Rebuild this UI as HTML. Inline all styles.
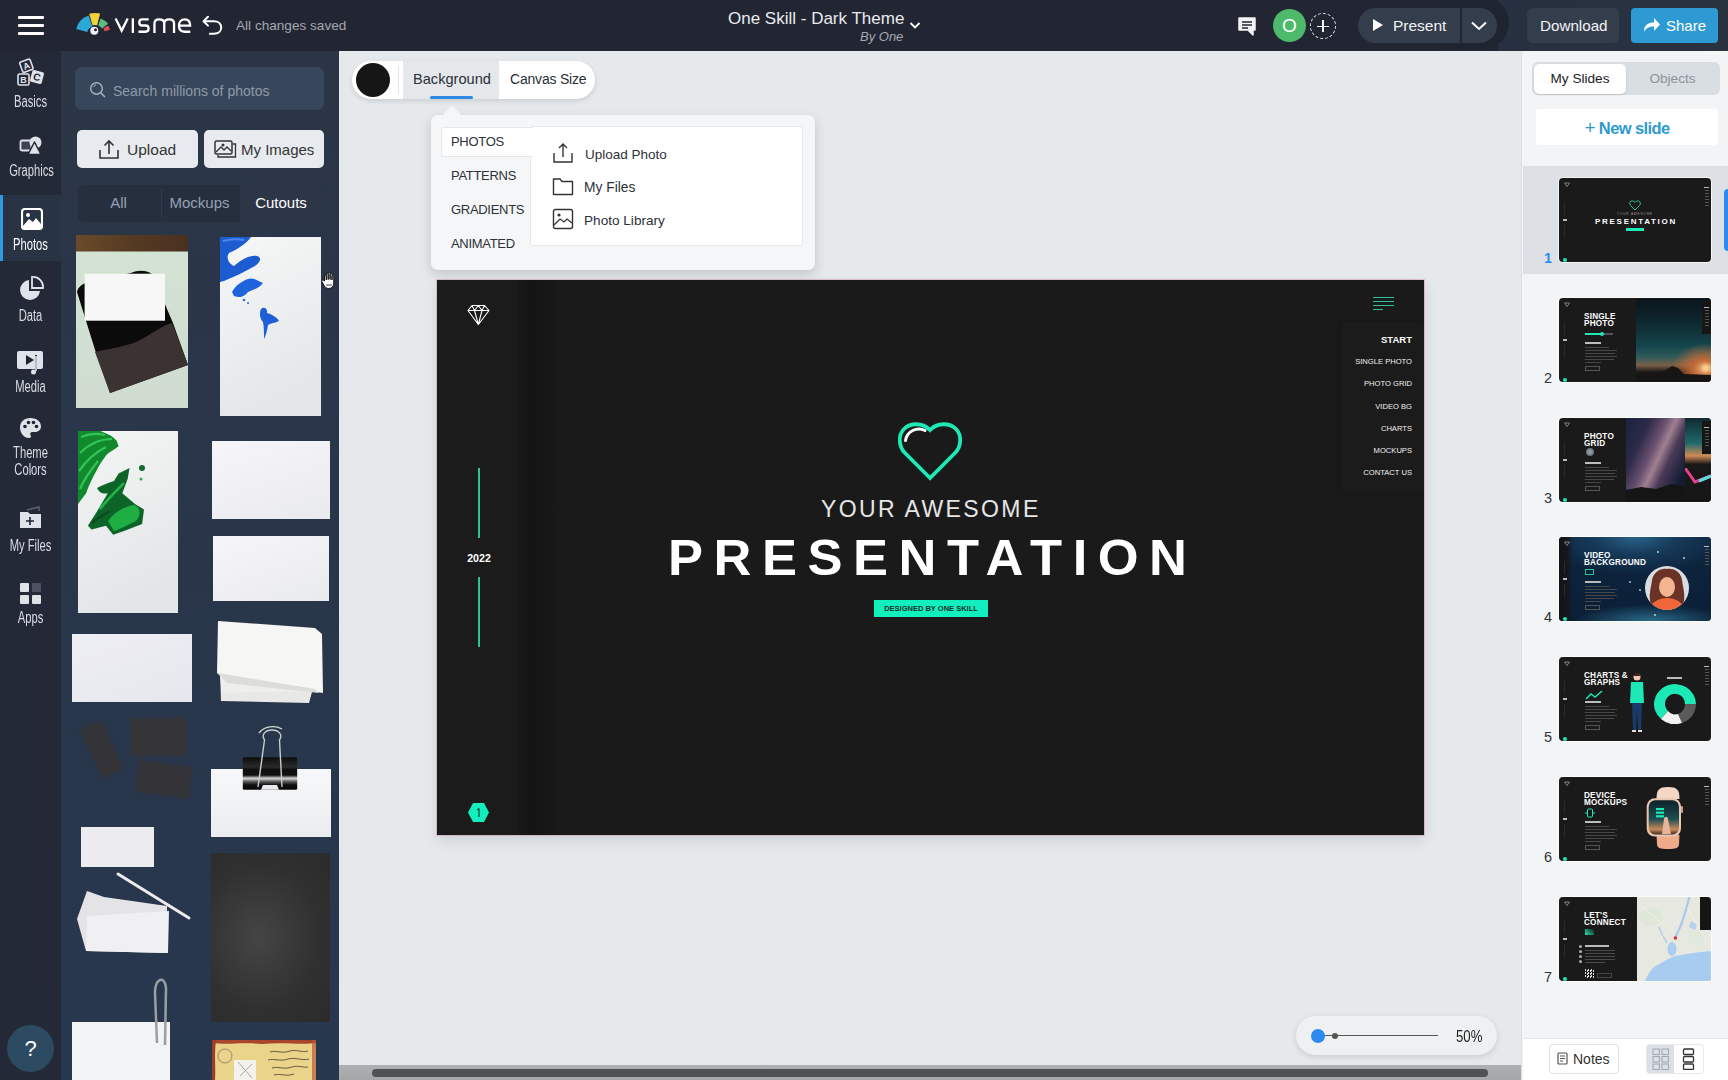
<!DOCTYPE html>
<html><head><meta charset="utf-8">
<style>
*{margin:0;padding:0;box-sizing:border-box}
html,body{width:1728px;height:1080px;overflow:hidden;font-family:"Liberation Sans",sans-serif;background:#e6e9ec}
.a{position:absolute}
#top{left:0;top:0;width:1728px;height:51px;background:#222633}
#rail{left:0;top:51px;width:61px;height:1029px;background:#242937}
#panel{left:61px;top:51px;width:278px;height:1029px;background:linear-gradient(#2b3546 0%,#29364a 50%,#27374e 100%)}
#canvas{left:339px;top:51px;width:1182px;height:1029px;background:#e6e9ec}
#right{left:1521px;top:51px;width:207px;height:1029px;background:#f3f4f5;border-left:1px solid #dcdfe3;overflow:hidden}
.btn{background:#e7ebf0;border-radius:5px}
.th{width:152px;height:84px;border-radius:4px;background:#1a1a1a;overflow:hidden;font-size:0;box-shadow:0 0 0 1px rgba(255,255,255,.7)}
.lbl{color:#d9dde4;font-size:16px;text-align:center;width:61px;left:0;transform:scaleX(.70)}
</style></head><body>
<div id="top" class="a">
 <div class="a" style="left:18px;top:16px;width:26px;height:3px;background:#fff;border-radius:1px"></div>
 <div class="a" style="left:18px;top:24px;width:26px;height:3px;background:#fff;border-radius:1px"></div>
 <div class="a" style="left:18px;top:32px;width:26px;height:3px;background:#fff;border-radius:1px"></div>
 <svg class="a" style="left:70px;top:5px" width="45" height="36" viewBox="0 0 45 36"><path d="M6.16 23.95 A19.5 19.5 0 0 1 18.65 10.56 L22.40 21.44 A8 8 0 0 0 17.27 26.93 Z" fill="#2aa8d8"/><path d="M19.21 8.81 A21 21 0 0 1 30.08 8.62 L27.18 20.27 A9 9 0 0 0 22.52 20.35 Z" fill="#f2d33c"/><path d="M30.64 13.50 A16.5 16.5 0 0 1 38.00 18.84 L32.09 23.46 A9 9 0 0 0 28.08 20.54 Z" fill="#5cba7d"/><path d="M38.00 20.56 A15.5 15.5 0 0 1 39.90 24.73 L34.61 26.24 A10 10 0 0 0 33.39 23.55 Z" fill="#e04b50"/><circle cx="24.299999999999997" cy="25.8" r="4" fill="#f4f6fa"/><circle cx="25.5" cy="24.7" r="1.5" fill="#222633"/></svg>
 <svg class="a" style="left:108px;top:10px" width="90" height="30" viewBox="0 0 90 30"><g fill="none" stroke="#fff" stroke-width="2.3"><path d="M7.6 8.6 L13.65 20.6 L19.7 8.6" stroke-linejoin="miter"/><path d="M24.85 8.3 V22.9"/><path d="M40.6 9.45 H34 C32 9.45 31.3 10.8 31.3 12.4 C31.3 14.3 32.3 15.5 34.3 15.5 H37.6 C39.6 15.5 40.6 16.7 40.6 18.6 C40.6 20.6 39.6 21.75 37.6 21.75 H30.5"/><path d="M46.45 22.9 V13.6 C46.45 11 48.3 9.45 51.2 9.45 C54.2 9.45 56.25 11 56.25 13.6 V22.9 M56.25 13.6 C56.25 11 58.3 9.45 61.2 9.45 C64.1 9.45 66.05 11 66.05 13.6 V22.9"/><path d="M71 15.6 H82.15 C82.15 11.6 79.8 9.45 76.6 9.45 C73.2 9.45 70.95 12 70.95 15.6 C70.95 19.4 73.2 21.75 76.6 21.75 H82.3"/></g></svg>
 <svg class="a" style="left:200px;top:14px" width="24" height="22" viewBox="0 0 24 22"><g fill="none" stroke="#fff" stroke-width="2" stroke-linecap="round" stroke-linejoin="round"><path d="M8 2.8 L3.5 7.2 L8 11.6"/><path d="M4 7.2 H14 C18.5 7.2 21.2 10 21.2 13.6 C21.2 17.3 18.5 19.8 14 19.8 H9.8"/></g></svg>
 <div class="a" style="left:236px;top:18px;font-size:13.6px;color:#a3a8b2">All changes saved</div>
 <div class="a" style="left:728px;top:9px;font-size:17px;color:#e9ebef">One Skill - Dark Theme</div>
 <div class="a" style="left:860px;top:29px;font-size:13px;color:#a3a8b2;font-style:italic">By One</div>
 <svg class="a" style="left:909px;top:21px" width="12" height="9" viewBox="0 0 12 9"><path d="M1.5 2 L6 6.5 L10.5 2" fill="none" stroke="#fff" stroke-width="1.8"/></svg>
 <svg class="a" style="left:1237px;top:16px" width="20" height="20" viewBox="0 0 20 20"><path d="M2 2 H18 V14 H16 V19 L11 14 H2 Z" fill="#f2f3f5" stroke="#f2f3f5" stroke-linejoin="round" stroke-width="1.5"/><path d="M5 6 H15 M5 9 H15 M5 12 H11" stroke="#222633" stroke-width="1.3"/></svg>
 <div class="a" style="left:1273px;top:9px;width:33px;height:33px;border-radius:50%;background:#4db96a;color:#fff;font-size:19px;text-align:center;line-height:33px">O</div>
 <div class="a" style="left:1310px;top:13px;width:26px;height:26px;border-radius:50%;border:1.5px dashed #e5e7eb"></div>
 <div class="a" style="left:1317px;top:25.5px;width:12px;height:1.2px;background:#f4f4f4"></div>
 <div class="a" style="left:1322.4px;top:20px;width:1.2px;height:12px;background:#f4f4f4"></div>
 <div class="a" style="left:1498px;top:0;width:230px;height:51px;background:linear-gradient(90deg,#273040,#29323f)"></div>
 <div class="a" style="left:1440px;top:-3px;width:69px;height:52px;border-radius:0 27px 27px 0;background:#1f2431"></div>
 <div class="a" style="left:1358px;top:8px;width:139px;height:35px;border-radius:18px;background:#343d4c"></div>
 <div class="a" style="left:1460px;top:8px;width:2px;height:35px;background:#222633"></div>
 <svg class="a" style="left:1372px;top:18px" width="12" height="14" viewBox="0 0 12 14"><path d="M1 1 L11 7 L1 13 Z" fill="#fff"/></svg>
 <div class="a" style="left:1393px;top:17px;font-size:15.5px;color:#f2f3f5">Present</div>
 <svg class="a" style="left:1469px;top:20px" width="20" height="12" viewBox="0 0 20 12"><path d="M3 2.5 L10 9 L17 2.5" fill="none" stroke="#fff" stroke-width="2"/></svg>
 <div class="a" style="left:1527px;top:8px;width:92px;height:35px;border-radius:6px;background:#343d4b"></div>
 <div class="a" style="left:1540px;top:17px;font-size:15.2px;color:#f2f3f5">Download</div>
 <div class="a" style="left:1631px;top:8px;width:87px;height:35px;border-radius:4px;background:#2d9ad3"></div>
 <svg class="a" style="left:1643px;top:17px" width="18" height="16" viewBox="0 0 18 16"><path d="M1 15 C1 8 5 5.5 11 5.5 V1 L17 7.5 L11 14 V9.5 C6 9.5 3 11 1 15 Z" fill="#fff"/></svg>
 <div class="a" style="left:1666px;top:17px;font-size:15px;color:#fff">Share</div>
</div>
<div id="rail" class="a">
 <div class="a" style="left:0;top:144px;width:61px;height:66px;background:#283344"></div>
 <div class="a" style="left:0;top:144px;width:3px;height:66px;background:#2d9be0"></div>
 <!-- basics -->
 <svg class="a" style="left:16px;top:7px" width="30" height="30" viewBox="0 0 30 30">
  <g transform="rotate(-20 11 8)"><rect x="5" y="2" width="11" height="11" rx="1.5" fill="none" stroke="#dfe2e8" stroke-width="1.6"/><text x="10.5" y="11" font-size="9" font-family="Liberation Sans" font-weight="bold" text-anchor="middle" fill="#dfe2e8">A</text></g>
  <rect x="2" y="16" width="11" height="11" rx="1.5" fill="none" stroke="#dfe2e8" stroke-width="1.6"/><text x="7.5" y="25" font-size="9" font-family="Liberation Sans" font-weight="bold" text-anchor="middle" fill="#dfe2e8">B</text>
  <g transform="rotate(15 21 19)"><rect x="15" y="13" width="12" height="12" rx="1.5" fill="#dfe2e8"/><text x="21" y="22.5" font-size="10" font-family="Liberation Sans" font-weight="bold" text-anchor="middle" fill="#1f2432">C</text></g>
 </svg>
 <div class="a lbl" style="top:42px">Basics</div>
 <!-- graphics -->
 <svg class="a" style="left:18px;top:84px" width="26" height="24" viewBox="0 0 26 24">
  <rect x="2.5" y="5.5" width="11" height="10" rx="1.5" fill="#3d4350" stroke="#dfe2e8" stroke-width="1.8"/>
  <circle cx="17.5" cy="7.5" r="6" fill="#dfe2e8"/>
  <path d="M16.5 7 L23 19.5 H10 Z" fill="#dfe2e8" stroke="#232836" stroke-width="1.5" stroke-linejoin="round"/>
 </svg>
 <div class="a lbl" style="top:111px">Graphics</div>
 <!-- photos -->
 <svg class="a" style="left:21px;top:157px" width="22" height="22" viewBox="0 0 22 22">
  <rect x="1" y="1" width="20" height="20" rx="3" fill="none" stroke="#fff" stroke-width="2.2"/>
  <circle cx="7" cy="7" r="2" fill="#fff"/>
  <path d="M2 18 L8 11 L12 14 L15 10 L20 16 V20 H2 Z" fill="#fff"/>
 </svg>
 <div class="a lbl" style="top:185px;color:#fff">Photos</div>
 <!-- data -->
 <svg class="a" style="left:18px;top:225px" width="26" height="26" viewBox="0 0 26 26">
  <path d="M11 4 A10 10 0 1 0 22 15 H11 Z" fill="#dfe2e8"/>
  <path d="M14 1 A10 10 0 0 1 25 12 H14 Z" fill="none" stroke="#dfe2e8" stroke-width="1.8"/>
 </svg>
 <div class="a lbl" style="top:256px">Data</div>
 <!-- media -->
 <svg class="a" style="left:16px;top:298px" width="29" height="28" viewBox="0 0 29 28">
  <rect x="1" y="2" width="26" height="18" rx="2" fill="#dfe2e8"/>
  <path d="M10 6 L18 11 L10 16 Z" fill="#1f2432"/>
  <rect x="19" y="6" width="2" height="16" fill="#1f2432"/>
  <path d="M20 7 V22" stroke="#dfe2e8" stroke-width="1.6"/>
  <circle cx="17.5" cy="23" r="2.5" fill="#dfe2e8"/>
 </svg>
 <div class="a lbl" style="top:327px">Media</div>
 <!-- theme colors -->
 <svg class="a" style="left:19px;top:366px" width="23" height="22" viewBox="0 0 23 22">
  <path d="M11.5 1 C5 1 1 5 1 10.5 C1 16 5 21 10 21 C12 21 12.5 19.5 11.5 18 C10.5 16.5 11.5 15 13.5 15 H16 C19.5 15 22 12.5 22 9.5 C22 4.5 17.5 1 11.5 1 Z" fill="#dfe2e8"/>
  <circle cx="6" cy="9.5" r="1.8" fill="#1f2432"/><circle cx="9.5" cy="5.5" r="1.8" fill="#1f2432"/><circle cx="14.5" cy="5.5" r="1.8" fill="#1f2432"/><circle cx="17.5" cy="9.5" r="1.8" fill="#1f2432"/>
 </svg>
 <div class="a lbl" style="top:393px;line-height:17px">Theme<br>Colors</div>
 <!-- my files -->
 <svg class="a" style="left:19px;top:455px" width="24" height="24" viewBox="0 0 24 24">
  <path d="M1 6 H9 L11 8 H22 V22 H1 Z" fill="#dfe2e8"/>
  <path d="M8 4 L20 1 V5" fill="none" stroke="#5b6270" stroke-width="1.5"/>
  <path d="M7 15 H15 M11 11 V19" stroke="#1f2432" stroke-width="1.6"/>
 </svg>
 <div class="a lbl" style="top:486px">My Files</div>
 <!-- apps -->
 <svg class="a" style="left:20px;top:532px" width="22" height="22" viewBox="0 0 22 22">
  <rect x="0" y="0" width="9" height="9" rx="1" fill="#dfe2e8"/><rect x="12" y="0" width="9" height="9" rx="1" fill="#4a5262"/>
  <rect x="0" y="12" width="9" height="9" rx="1" fill="#dfe2e8"/><rect x="12" y="12" width="9" height="9" rx="1" fill="#dfe2e8"/>
 </svg>
 <div class="a lbl" style="top:558px">Apps</div>
 <div class="a" style="left:7px;top:974px;width:47px;height:47px;border-radius:50%;background:#2c4b63;color:#fff;font-size:22px;text-align:center;line-height:47px">?</div>
</div>
<div id="panel" class="a">
 <div class="a" style="left:14px;top:15.5px;width:249px;height:43.5px;border-radius:7px;background:#37465a"></div>
 <svg class="a" style="left:28px;top:30px" width="18" height="18" viewBox="0 0 18 18"><circle cx="7.5" cy="7.5" r="5.8" fill="none" stroke="#a9b3c2" stroke-width="1.4"/><path d="M11.7 11.7 L16 16" stroke="#a9b3c2" stroke-width="1.5"/><path d="M4.5 6 A3.5 3.5 0 0 1 7 3.8" fill="none" stroke="#a9b3c2" stroke-width="1"/></svg>
 <div class="a" style="left:52px;top:31.5px;font-size:14px;color:#8f9aab">Search millions of photos</div>
 <div class="a btn" style="left:16px;top:79px;width:121px;height:38px"></div>
 <svg class="a" style="left:37px;top:88px" width="22" height="21" viewBox="0 0 22 21"><path d="M2 11 V19 H20 V11" fill="none" stroke="#333" stroke-width="1.6"/><path d="M11 15 V2 M6.5 6.5 L11 2 L15.5 6.5" fill="none" stroke="#333" stroke-width="1.6"/></svg>
 <div class="a" style="left:66px;top:89.5px;font-size:15.5px;color:#333">Upload</div>
 <div class="a btn" style="left:143px;top:79px;width:120px;height:38px"></div>
 <svg class="a" style="left:153px;top:88px" width="23" height="20" viewBox="0 0 23 20"><rect x="1" y="2" width="17" height="13" rx="1.5" fill="none" stroke="#333" stroke-width="1.5"/><path d="M19 5 H21.5 V18 H4 V16" fill="none" stroke="#333" stroke-width="1.3"/><path d="M2 13 L7 8 L10 11 L13 8 L17 12" fill="none" stroke="#333" stroke-width="1.3"/><circle cx="9" cy="6" r="1.5" fill="#333"/></svg>
 <div class="a" style="left:180px;top:90px;font-size:15px;color:#333">My Images</div>
 <div class="a" style="left:17px;top:134px;width:244px;height:37px;border-radius:5px;background:#252f3e"></div>
 <div class="a" style="left:179px;top:134px;width:82px;height:37px;border-radius:0 5px 5px 0;background:#2c3647"></div>
 <div class="a" style="left:100px;top:138px;width:1px;height:29px;background:#2f3a4b"></div>
 <div class="a" style="left:17px;top:143px;width:81px;text-align:center;font-size:15px;color:#97a1b1">All</div>
 <div class="a" style="left:98px;top:143px;width:81px;text-align:center;font-size:15px;color:#97a1b1">Mockups</div>
 <div class="a" style="left:179px;top:143px;width:82px;text-align:center;font-size:15px;color:#fff">Cutouts</div>
 <svg class="a" style="left:15px;top:184px" width="112" height="173" viewBox="0 0 112 173"><defs><linearGradient id="mint" x1="0" y1="0" x2="0" y2="1"><stop offset="0" stop-color="#d4e3d4"/><stop offset="1" stop-color="#cfdccf"/></linearGradient><linearGradient id="brn" x1="0" y1="0" x2="1" y2="0"><stop offset="0" stop-color="#6a4a2a"/><stop offset=".5" stop-color="#553a22"/><stop offset="1" stop-color="#4a3020"/></linearGradient></defs><rect width="112" height="173" fill="url(#mint)"/><rect width="112" height="16.5" fill="url(#brn)"/><path d="M1 57 C2 52 6 49 12 47 L55 38 C62 35 70 35 76 39 L97 88 L112 130 L34 158 L20 118 Z" fill="#0c0b0b"/><path d="M19 117 C35 113 52 112 66 104 C78 97 88 90 96 88 L112 130 L34 158 Z" fill="#3b3332"/><rect x="8.6" y="38.7" width="80.4" height="47" fill="#f6f7f6"/></svg>
 <svg class="a" style="left:158.7px;top:186px" width="101" height="179" viewBox="0 0 101 179"><defs><linearGradient id="pap" x1="0" y1="0" x2=".3" y2="1"><stop offset="0" stop-color="#f6f7f7"/><stop offset="1" stop-color="#e4e6e8"/></linearGradient></defs><rect width="101" height="179" fill="url(#pap)"/><path d="M0 0 H31 C27 6 18 12 9 16 C6 20 8 26 14 29 C22 22 30 18 37 19 C42 20 41 26 33 30 C24 35 14 40 4 44 L0 45 Z" fill="#1d5bd0"/><path d="M3 4 C10 2 18 2 24 3" stroke="#4a88f0" stroke-width="2" fill="none"/><path d="M12 55 C16 48 22 44 28 42 C33 40 38 44 43 46 C40 50 34 53 28 55 C24 60 20 61 14 59 Z" fill="#1f63dc"/><circle cx="24" cy="63" r="1.3" fill="#2a66d8"/><circle cx="28" cy="66" r="1" fill="#2a66d8"/><path d="M41 72 C44 69 48 72 47 76 C51 77 57 80 59 84 C55 86 51 86 48 88 C47 94 46 98 44 102 C44 96 44 90 43 85 C40 82 39 76 41 72 Z" fill="#1e5ed6"/></svg>
 <svg class="a" style="left:17px;top:380px" width="100" height="182" viewBox="0 0 100 182"><defs><linearGradient id="pap2" x1="0" y1="0" x2=".3" y2="1"><stop offset="0" stop-color="#f4f5f5"/><stop offset="1" stop-color="#e3e6e7"/></linearGradient></defs><rect width="100" height="182" fill="url(#pap2)"/><path d="M0 0 H22.6 C30 3 36 6 38.8 9.9 L40.6 15.3 C36 19 31 21 28 24.4 C24 30 21 34 19 38.8 C15 46 11 54 8.1 62.3 L0 73.1 Z" fill="#118a2e"/><path d="M3 6 C10 3 18 2 27 4 M2 22 C10 14 20 8 34 8 M1 40 C8 30 16 22 28 16 M2 58 C6 48 12 40 20 30" stroke="#34c455" stroke-width="2.2" fill="none"/><path d="M9.9 94.8 L19 80.4 L29.8 62.3 C26 63 22 63 19 57 C24 54 30 52 36 50 L40.6 42.4 L51.5 37 L49.7 47.7 L44.3 62.3 L57 73 L66 78.5 L64.1 93 L46 100 L35.2 103.8 L28 94.8 L13.5 98.5 Z" fill="#0c6428"/><path d="M30 90 C36 82 44 76 56 74 C62 76 64 84 58 90 C50 94 42 98 36 100 Z" fill="#1fae42"/><path d="M22 78 C28 70 36 62 46 52" stroke="#23b246" stroke-width="2.5" fill="none"/><path d="M14 92 C20 86 26 84 32 80" stroke="#0a4e20" stroke-width="2.5" fill="none"/><circle cx="64" cy="37" r="3" fill="#0f6a2c"/><circle cx="63" cy="48" r="1.5" fill="#2bb04a"/></svg>
 <div class="a" style="left:151px;top:390px;width:118px;height:78px;background:linear-gradient(160deg,#f6f6f8,#e9eaee)"></div>
 <div class="a" style="left:152px;top:485px;width:116px;height:65px;background:linear-gradient(160deg,#f6f6f8,#e9eaee)"></div>
 <div class="a" style="left:11px;top:583px;width:120px;height:68px;background:linear-gradient(160deg,#eeeff4,#e6e6ee)"></div>
 <svg class="a" style="left:156px;top:570px" width="112" height="84" viewBox="0 0 112 84"><path d="M3 50 L4 80 L92 82 L98 60 Z" fill="#e8e8e6"/><path d="M3 55 L5 72 L100 70 L102 48 Z" fill="#eeeeec"/><path d="M1 0 L98 7 L105 13 L106 72 L12 58 L0 52 Z" fill="#f6f6f5"/><path d="M0 52 L98 68 L102 72 L10 62 Z" fill="#dcdcda"/></svg>
 <svg class="a" style="left:15px;top:666px;filter:blur(1.8px)" width="116" height="84" viewBox="0 0 116 84"><path d="M3 12 L25 3 L48 52 L27 62 Z" fill="#363232" opacity=".8"/><rect x="55" y="1" width="55" height="38" fill="#393433" opacity=".8"/><path d="M62 43 L116 50 L114 82 L60 75 Z" fill="#363232" opacity=".8"/></svg>
 <svg class="a" style="left:150px;top:669px" width="122" height="120" viewBox="0 0 122 120"><defs><linearGradient id="cg" x1="0" y1="0" x2="0" y2="1"><stop offset="0" stop-color="#f7f8fa"/><stop offset="1" stop-color="#eaecef"/></linearGradient><linearGradient id="clip" x1="0" y1="0" x2="0" y2="1"><stop offset="0" stop-color="#0d0d0d"/><stop offset=".3" stop-color="#2a2a2a"/><stop offset=".38" stop-color="#0f0f0f"/><stop offset=".55" stop-color="#111"/><stop offset=".65" stop-color="#d5d6d8"/><stop offset=".75" stop-color="#5a5a5a"/><stop offset=".85" stop-color="#101010"/><stop offset="1" stop-color="#080808"/></linearGradient></defs><rect x="0" y="49" width="120" height="68" fill="url(#cg)"/><rect x="31.8" y="37.3" width="54.4" height="32.4" rx="1.5" fill="url(#clip)"/><path d="M50 69.7 L52 65 H66 L68 69.7 Z" fill="#e8eaec"/><path d="M47 67 L53.5 20 C50 15 54 10 61 10 C68 10 72 15 68.5 20 L71 67" fill="none" stroke="#c9cbce" stroke-width="1.4"/><path d="M48 13 C53 6 64 5 71 9" fill="none" stroke="#d2d4d6" stroke-width="1.3"/></svg>
 <div class="a" style="left:20px;top:776px;width:73px;height:40px;background:#ecebef"></div>
 <svg class="a" style="left:13px;top:820px" width="120" height="85" viewBox="0 0 120 85"><path d="M3 48 L13 20 L30 26 L93 35 L93 82 L12 80 Z" fill="#e4e3e6"/><path d="M12 80 L13 45 L95 40 L94 82 Z" fill="#f0eff2"/><path d="M44 3 L115 47" stroke="#ececee" stroke-width="3" stroke-linecap="round"/></svg>
 <div class="a" style="left:150px;top:802px;width:119px;height:169px;background:radial-gradient(ellipse at 40% 50%,#454545,#303030 60%,#2b2b2b)"></div>
 <div class="a" style="left:11px;top:971px;width:98px;height:58px;background:#f2f3f5"></div>
 <svg class="a" style="left:90px;top:922px" width="20" height="75" viewBox="0 0 20 75"><path d="M6 70 L4 20 C4 5 14 2 15 15 L14 72" fill="none" stroke="#9a9ea3" stroke-width="2.5"/></svg>
 <svg class="a" style="left:151px;top:989px" width="104" height="40" viewBox="0 0 104 40"><rect x="0" y="0" width="104" height="40" fill="#e9d48a"/><path d="M0 0 H104 V3 C90 5 70 2 50 4 C30 2 15 5 0 3 Z" fill="#a8452c"/><path d="M0 0 V40 H3 C4 30 2 15 4 0 Z" fill="#9a3e28"/><path d="M100 0 V40 H104 V0 Z" fill="#b85a38" opacity=".7"/><circle cx="13" cy="16" r="7" fill="none" stroke="#9a8a6a" stroke-width="1"/><rect x="22" y="20" width="22" height="20" fill="#f4f2ec"/><path d="M26 22 L40 38 M40 24 L28 36" stroke="#aaa" stroke-width="1"/><path d="M58 12 C64 10 70 14 78 11 C84 9 90 13 96 11 M56 20 C62 18 68 22 76 19 C84 17 90 21 97 19 M60 28 C66 26 72 30 80 27 C86 25 92 28 96 27 M62 35 C68 33 74 37 82 34" fill="none" stroke="#5a4a3a" stroke-width=".9"/></svg>

</div>
<div id="canvas" class="a">
 <div class="a" style="left:13px;top:10px;width:243px;height:38px;border-radius:19px;background:#fff;box-shadow:0 2px 5px rgba(0,0,0,.12)"></div>
 <div class="a" style="left:17px;top:12px;width:34px;height:34px;border-radius:50%;background:#161616"></div>
 <div class="a" style="left:59px;top:15px;width:1px;height:28px;background:#e3e5e8"></div>
 <div class="a" style="left:64px;top:10px;width:96px;height:38px;background:#e5e8eb"></div>
 <div class="a" style="left:91px;top:45px;width:43px;height:3px;border-radius:2px;background:#2d8be6"></div>
 <div class="a" style="left:74px;top:20px;font-size:14.6px;color:#2a2f38">Background</div>
 <div class="a" style="left:171px;top:20px;font-size:14px;letter-spacing:-0.2px;color:#2a2f38">Canvas Size</div>
 <div class="a" style="left:92px;top:64px;width:384px;height:154.5px;border-radius:7px;background:#f5f6f7;box-shadow:0 4px 12px rgba(0,0,0,.16)"></div>
 <div class="a" style="left:107px;top:57px;width:12px;height:12px;background:#f5f6f7;transform:rotate(45deg)"></div>
 <div class="a" style="left:191px;top:75px;width:273px;height:120px;border-radius:3px;background:#fff;border:1px solid #e6e8eb"></div>
 <div class="a" style="left:102px;top:76px;width:92px;height:30px;border-radius:3px 0 0 3px;background:#fff;border:1px solid #e6e8eb;border-right:none"></div>
 <div class="a" style="left:112px;top:83px;font-size:13px;letter-spacing:-0.3px;color:#2d3139">PHOTOS</div>
 <div class="a" style="left:112px;top:117px;font-size:13px;letter-spacing:-0.3px;color:#2d3139">PATTERNS</div>
 <div class="a" style="left:112px;top:151px;font-size:13px;letter-spacing:-0.3px;color:#2d3139">GRADIENTS</div>
 <div class="a" style="left:112px;top:185px;font-size:13px;letter-spacing:-0.3px;color:#2d3139">ANIMATED</div>
 <svg class="a" style="left:213px;top:91px;" width="22" height="22" viewBox="0 0 22 22"><path d="M2 11 V20 H20 V11" fill="none" stroke="#333" stroke-width="1.4"/><path d="M11 15 V2 M7 6 L11 2 L15 6" fill="none" stroke="#333" stroke-width="1.4"/></svg>
 <div class="a" style="left:246px;top:95.5px;font-size:13.5px;color:#2d3139">Upload Photo</div>
 <svg class="a" style="left:213px;top:126px;" width="22" height="19" viewBox="0 0 22 19"><path d="M1.5 2 H8 L10 4.5 H20.5 V17.5 H1.5 Z" fill="none" stroke="#333" stroke-width="1.4" stroke-linejoin="round"/></svg>
 <div class="a" style="left:245px;top:128.5px;font-size:13.8px;color:#2d3139">My Files</div>
 <svg class="a" style="left:213px;top:157px;" width="22" height="22" viewBox="0 0 22 22"><rect x="1.5" y="1.5" width="19" height="19" rx="2" fill="none" stroke="#333" stroke-width="1.4"/><circle cx="7" cy="7" r="1.6" fill="#333"/><path d="M2 17 L8 11 L12 14 L15 11 L20 15" fill="none" stroke="#333" stroke-width="1.3"/></svg>
 <div class="a" style="left:245px;top:161.5px;font-size:13.6px;color:#2d3139">Photo Library</div>
 <div class="a" style="left:98px;top:229px;width:987px;height:555px;background:#1a1a1a;overflow:hidden;box-shadow:0 6px 14px rgba(0,0,0,.10);outline:1px solid rgba(200,120,130,.35)">
  <div class="a" style="left:0;top:0;width:82px;height:555px;background:#1b1b1b"></div>
  <div class="a" style="left:80px;top:0;width:50px;height:555px;background:linear-gradient(90deg,#191919,#141414 25%,#161616 55%,#1a1a1a)"></div>
  <svg class="a" style="left:30px;top:24px;" width="23" height="22" viewBox="0 0 23 22"><path d="M5 1.5 H17.5 L22 6.5 L11.3 20.5 L1 6.5 Z M1 6.5 H22 M5 1.5 L7.5 6.5 L11.3 1.5 L15 6.5 L17.5 1.5 M7.5 6.5 L11.3 20.5 L15 6.5" fill="none" stroke="#fff" stroke-width="1.1" stroke-linejoin="round"/></svg>
  <div class="a" style="left:41px;top:188px;width:1.6px;height:70px;background:#2ec296"></div>
  <div class="a" style="left:41px;top:297px;width:1.6px;height:70px;background:#2ec296"></div>
  <div class="a" style="left:21px;top:272px;width:42px;text-align:center;font-size:10.6px;font-weight:bold;color:#fff">2022</div>
  <svg class="a" style="left:30px;top:522px;" width="23" height="21" viewBox="0 0 23 21"><path d="M6 1 H17 L22 10.5 L17 20 H6 L1 10.5 Z" fill="#12efbe"/><path d="M10 8 L12 6.5 V15" fill="none" stroke="#1a1a1a" stroke-width="1"/></svg>
  <svg class="a" style="left:459px;top:139px" width="68" height="62" viewBox="0 0 68 62"><path d="M34 59 L9 34 C2.5 27.5 2 16 8 10 C14 4 26 3 34 11 C42 3 54 4 60 10 C66 16 65.5 27.5 59 34 Z" fill="none" stroke="#1ee8b4" stroke-width="3.8" stroke-linejoin="miter"/><path d="M9.5 21.5 A13.5 13.5 0 0 1 29 11.5" fill="none" stroke="#fff" stroke-width="3" stroke-linecap="round"/></svg>
  <div class="a" style="left:384px;top:216px;white-space:nowrap;font-size:23px;letter-spacing:2.4px;color:#e6e6e6">YOUR AWESOME</div>
  <div class="a" style="left:231px;top:249px;white-space:nowrap;font-size:50px;font-weight:bold;letter-spacing:10px;color:#fff;transform:scaleX(1.05);transform-origin:0 0">PRESENTATION</div>
  <div class="a" style="left:437px;top:320px;width:114px;height:17px;background:#12efbe;color:#14302a;font-size:7.5px;font-weight:bold;text-align:center;line-height:17px">DESIGNED BY ONE SKILL</div>
  <div class="a" style="left:905px;top:42px;width:82px;height:170px;background:#1b1b1b;box-shadow:-3px 0 8px rgba(0,0,0,.12)"></div>
  <div class="a" style="left:936px;top:17px;width:21px;height:1.4px;background:#2ec296"></div>
  <div class="a" style="left:936px;top:21px;width:21px;height:1.4px;background:#2ec296"></div>
  <div class="a" style="left:936px;top:25px;width:21px;height:1.4px;background:#2ec296"></div>
  <div class="a" style="left:936px;top:29px;width:10px;height:1.4px;background:#2ec296"></div>
  <div class="a" style="left:863px;top:54px;width:112px;text-align:right;font-size:9.5px;font-weight:bold;color:#fff;line-height:11px">START</div>
  <div class="a" style="left:863px;top:76px;width:112px;text-align:right;font-size:7.6px;font-weight:normal;color:#f2f2f2;line-height:11px">SINGLE PHOTO</div>
  <div class="a" style="left:863px;top:98px;width:112px;text-align:right;font-size:7.6px;font-weight:normal;color:#f2f2f2;line-height:11px">PHOTO GRID</div>
  <div class="a" style="left:863px;top:121px;width:112px;text-align:right;font-size:7.6px;font-weight:normal;color:#f2f2f2;line-height:11px">VIDEO BG</div>
  <div class="a" style="left:863px;top:143px;width:112px;text-align:right;font-size:7.6px;font-weight:normal;color:#f2f2f2;line-height:11px">CHARTS</div>
  <div class="a" style="left:863px;top:165px;width:112px;text-align:right;font-size:7.6px;font-weight:normal;color:#f2f2f2;line-height:11px">MOCKUPS</div>
  <div class="a" style="left:863px;top:187px;width:112px;text-align:right;font-size:7.6px;font-weight:normal;color:#f2f2f2;line-height:11px">CONTACT US</div>
 </div>
 <div class="a" style="left:957px;top:965px;width:201px;height:39px;border-radius:20px;background:#eef0f2;box-shadow:0 2px 6px rgba(0,0,0,.12)"></div>
 <div class="a" style="left:977px;top:984px;width:122px;height:1px;background:#555"></div>
 <div class="a" style="left:972px;top:978px;width:14px;height:14px;border-radius:50%;background:#2d8af0"></div>
 <div class="a" style="left:993px;top:982px;width:6px;height:6px;border-radius:50%;background:#555"></div>
 <div class="a" style="left:1117px;top:976px;font-size:16.5px;color:#222;transform:scaleX(.8);transform-origin:left">50%</div>
 <div class="a" style="left:0px;top:1014px;width:1182px;height:15px;background:linear-gradient(#aeb1b3,#a4a6a7)"></div>
 <div class="a" style="left:33px;top:1018px;width:1116px;height:7.5px;border-radius:4px;background:#505152"></div>
 <svg class="a" style="left:-18px;top:220px" width="17" height="19" viewBox="0 0 17 19"><path d="M3.5 10 V5 C3.5 3.8 5.3 3.8 5.3 5 V9 V3 C5.3 1.8 7.2 1.8 7.2 3 V8.5 V2.3 C7.2 1.1 9.1 1.1 9.1 2.3 V8.5 V3.2 C9.1 2 11 2 11 3.2 V9 V5.5 C11 4.3 12.8 4.3 12.8 5.5 V12 C12.8 15.5 10.8 17.5 7.8 17.5 C5 17.5 3.8 16 2.2 13 L0.8 10.5 C0.3 9.5 1.5 8.6 2.4 9.4 Z" fill="#fff" stroke="#111" stroke-width="1"/><path d="M6 13 V15 M8 13 V15 M10 13 V15" stroke="#111" stroke-width=".8"/></svg>
</div>
<div id="right" class="a">
 <div class="a" style="left:10px;top:11px;width:188px;height:33px;border-radius:6px;background:#d9dee3"></div>
 <div class="a" style="left:12px;top:13px;width:92px;height:30px;border-radius:5px;background:#fff;box-shadow:0 1px 2px rgba(0,0,0,.15)"></div>
 <div class="a" style="left:12px;top:20px;width:92px;text-align:center;font-size:13.6px;color:#222">My Slides</div>
 <div class="a" style="left:104px;top:20px;width:93px;text-align:center;font-size:13.6px;color:#8c939b">Objects</div>
 <div class="a" style="left:14px;top:58px;width:182px;height:36px;background:#fff;border-radius:3px"></div>
 <div class="a" style="left:14px;top:66px;width:182px;text-align:center;font-size:16.5px;font-weight:bold;color:#2f9bcf;letter-spacing:-0.6px"><span style="font-weight:normal;font-size:19px">+</span> New slide</div>
 <div class="a" style="left:1px;top:115px;width:206px;height:108px;background:#dde1e6"></div>
 <div class="a" style="left:202px;top:138px;width:8px;height:62px;border-radius:4px;background:#2d8af0"></div>
 <div class="a" style="left:22px;top:198.5px;font-size:14.5px;color:#2d8af0;font-weight:bold;">1</div>
 <div class="a th" style="left:37px;top:127px;" id="th1"><svg class="a" style="left:5px;top:4px" width="6" height="5" viewBox="0 0 6 5"><path d="M0.5 1 H5.5 L3 4.5 Z" fill="none" stroke="#999" stroke-width=".8"/></svg><div class="a" style="left:5px;top:24px;width:1px;height:13px;background:#2a2a2a"></div><div class="a" style="left:5px;top:47px;width:1px;height:13px;background:#2a2a2a"></div><div class="a" style="left:4px;top:41px;width:4px;height:1.5px;background:#bbb"></div><div class="a" style="left:4px;top:80px;width:4px;height:4px;border-radius:50%;background:#1de9b6"></div><div class="a" style="left:143px;top:3px;width:9px;height:33px;background:transparent"></div><div class="a" style="left:145px;top:9px;width:5px;height:1px;background:#bbb"></div><div class="a" style="left:146px;top:12px;width:4px;height:1px;background:#555"></div><div class="a" style="left:146px;top:15px;width:4px;height:1px;background:#555"></div><div class="a" style="left:146px;top:18px;width:4px;height:1px;background:#555"></div><div class="a" style="left:146px;top:21px;width:4px;height:1px;background:#555"></div><div class="a" style="left:146px;top:24px;width:4px;height:1px;background:#555"></div><div class="a" style="left:146px;top:27px;width:4px;height:1px;background:#555"></div><svg class="a" style="left:70px;top:22px" width="12" height="11" viewBox="0 0 12 11"><path d="M6 10 L1.5 5.5 C0 4 0.5 1.5 2.5 1 C4 0.5 5 1.5 6 2.5 C7 1.5 8 0.5 9.5 1 C11.5 1.5 12 4 10.5 5.5 Z" fill="none" stroke="#2ec296" stroke-width="1"/></svg><div class="a" style="left:0;top:34px;width:152px;text-align:center;font-size:3.2px;letter-spacing:.8px;color:#999">YOUR AWESOME</div><div class="a" style="left:0;top:38.5px;width:152px;text-align:center;font-size:8px;font-weight:bold;letter-spacing:1.7px;color:#fff;text-indent:2px">PRESENTATION</div><div class="a" style="left:67px;top:50px;width:18px;height:3px;background:#1de9b6"></div></div>
 <div class="a" style="left:22px;top:318.5px;font-size:14.5px;color:#333;">2</div>
 <div class="a th" style="left:37px;top:247px;" id="th2"><svg class="a" style="left:5px;top:4px" width="6" height="5" viewBox="0 0 6 5"><path d="M0.5 1 H5.5 L3 4.5 Z" fill="none" stroke="#999" stroke-width=".8"/></svg><div class="a" style="left:5px;top:24px;width:1px;height:13px;background:#2a2a2a"></div><div class="a" style="left:5px;top:47px;width:1px;height:13px;background:#2a2a2a"></div><div class="a" style="left:4px;top:41px;width:4px;height:1.5px;background:#bbb"></div><div class="a" style="left:4px;top:80px;width:4px;height:4px;border-radius:50%;background:#1de9b6"></div><div class="a" style="left:77px;top:0;width:75px;height:84px;background:radial-gradient(ellipse 45% 30% at 92% 84%,#f0b070 0%,#c06a38 35%,rgba(160,90,50,0) 100%),linear-gradient(#0b141b 0%,#0e2830 30%,#15474e 58%,#2f5a5a 70%,#7a6048 80%,#1a1816 88%,#141414 100%)"></div><div class="a" style="left:140px;top:64px;width:14px;height:12px;border-radius:50%;background:radial-gradient(#ffd79a,rgba(240,140,60,0) 70%)"></div><svg class="a" style="left:77px;top:60px" width="75" height="24" viewBox="0 0 75 24"><path d="M0 18 L20 16 L30 12 L36 8 L42 10 L48 16 L75 17 V24 H0 Z" fill="#161414"/></svg><div class="a" style="left:25px;top:14.5px;font-size:8.2px;line-height:7.8px;font-weight:bold;color:#fff;letter-spacing:.2px">SINGLE<br>PHOTO</div><div class="a" style="left:26px;top:35px;width:28px;height:2px;background:#555"></div><div class="a" style="left:26px;top:35px;width:16px;height:2px;background:#1de9b6"></div><div class="a" style="left:41px;top:34px;width:4px;height:4px;border-radius:50%;background:#1de9b6"></div><div class="a" style="left:26px;top:44px;width:16px;height:1.5px;background:#bdbdbd"></div><div class="a" style="left:26px;top:49px;width:24px;height:1px;background:#474747"></div><div class="a" style="left:26px;top:52px;width:32px;height:1px;background:#474747"></div><div class="a" style="left:26px;top:55px;width:30px;height:1px;background:#474747"></div><div class="a" style="left:26px;top:58px;width:32px;height:1px;background:#474747"></div><div class="a" style="left:26px;top:61px;width:29px;height:1px;background:#474747"></div><div class="a" style="left:26px;top:64px;width:16px;height:1px;background:#474747"></div><div class="a" style="left:26px;top:68px;width:15px;height:5px;border:1px solid #555"></div><div class="a" style="left:143px;top:3px;width:9px;height:33px;background:#161616"></div><div class="a" style="left:145px;top:9px;width:5px;height:1px;background:#bbb"></div><div class="a" style="left:146px;top:12px;width:4px;height:1px;background:#555"></div><div class="a" style="left:146px;top:15px;width:4px;height:1px;background:#555"></div><div class="a" style="left:146px;top:18px;width:4px;height:1px;background:#555"></div><div class="a" style="left:146px;top:21px;width:4px;height:1px;background:#555"></div><div class="a" style="left:146px;top:24px;width:4px;height:1px;background:#555"></div><div class="a" style="left:146px;top:27px;width:4px;height:1px;background:#555"></div></div>
 <div class="a" style="left:22px;top:438.5px;font-size:14.5px;color:#333;">3</div>
 <div class="a th" style="left:37px;top:367px;" id="th3"><svg class="a" style="left:5px;top:4px" width="6" height="5" viewBox="0 0 6 5"><path d="M0.5 1 H5.5 L3 4.5 Z" fill="none" stroke="#999" stroke-width=".8"/></svg><div class="a" style="left:5px;top:24px;width:1px;height:13px;background:#2a2a2a"></div><div class="a" style="left:5px;top:47px;width:1px;height:13px;background:#2a2a2a"></div><div class="a" style="left:4px;top:41px;width:4px;height:1.5px;background:#bbb"></div><div class="a" style="left:4px;top:80px;width:4px;height:4px;border-radius:50%;background:#1de9b6"></div><div class="a" style="left:67px;top:0;width:59px;height:84px;background:linear-gradient(115deg,#1a2240 0%,#2c2a48 25%,#6a5070 42%,#a08090 52%,#4a3a58 64%,#141c34 85%)"></div><svg class="a" style="left:67px;top:62px" width="59" height="22" viewBox="0 0 59 22"><path d="M0 10 L15 7 L30 9 L45 4 L59 6 V22 H0 Z" fill="#151515"/></svg><div class="a" style="left:126px;top:0;width:26px;height:84px;background:linear-gradient(#0f2a30 0%,#1f6a6a 30%,#d08a55 45%,#1a1818 55%,#161616 100%)"></div><svg class="a" style="left:126px;top:50px" width="26" height="34" viewBox="0 0 26 34"><path d="M0 0 L10 14 L26 8" fill="none" stroke="#e83e8c" stroke-width="3"/><path d="M14 13 L26 8" stroke="#5fd8e0" stroke-width="3"/></svg><div class="a" style="left:25px;top:14.5px;font-size:8.2px;line-height:7.8px;font-weight:bold;color:#fff;letter-spacing:.2px">PHOTO<br>GRID</div><div class="a" style="left:27px;top:30px;width:8px;height:8px;border-radius:50%;background:radial-gradient(#aaa,#456)"></div><div class="a" style="left:26px;top:44px;width:16px;height:1.5px;background:#bdbdbd"></div><div class="a" style="left:26px;top:49px;width:24px;height:1px;background:#474747"></div><div class="a" style="left:26px;top:52px;width:32px;height:1px;background:#474747"></div><div class="a" style="left:26px;top:55px;width:30px;height:1px;background:#474747"></div><div class="a" style="left:26px;top:58px;width:32px;height:1px;background:#474747"></div><div class="a" style="left:26px;top:61px;width:29px;height:1px;background:#474747"></div><div class="a" style="left:26px;top:64px;width:16px;height:1px;background:#474747"></div><div class="a" style="left:26px;top:68px;width:15px;height:5px;border:1px solid #555"></div><div class="a" style="left:143px;top:3px;width:9px;height:33px;background:#161616"></div><div class="a" style="left:145px;top:9px;width:5px;height:1px;background:#bbb"></div><div class="a" style="left:146px;top:12px;width:4px;height:1px;background:#555"></div><div class="a" style="left:146px;top:15px;width:4px;height:1px;background:#555"></div><div class="a" style="left:146px;top:18px;width:4px;height:1px;background:#555"></div><div class="a" style="left:146px;top:21px;width:4px;height:1px;background:#555"></div><div class="a" style="left:146px;top:24px;width:4px;height:1px;background:#555"></div><div class="a" style="left:146px;top:27px;width:4px;height:1px;background:#555"></div></div>
 <div class="a" style="left:22px;top:557.5px;font-size:14.5px;color:#333;">4</div>
 <div class="a th" style="left:37px;top:486px;" id="th4"><div class="a" style="left:0;top:0;width:152px;height:84px;background:radial-gradient(ellipse 60% 45% at 50% 0%,#2a6288 0%,#163a5a 45%,rgba(12,34,56,0) 100%),radial-gradient(ellipse 50% 20% at 60% 100%,#2a6a8a 0%,rgba(12,34,56,0) 100%),linear-gradient(#0e2640,#0b1f36)"></div><div class="a" style="left:0;top:0;width:14px;height:84px;background:linear-gradient(90deg,#121417,#13171c 55%,rgba(19,23,28,0))"></div><div class="a" style="left:98px;top:14px;width:1.5px;height:1.5px;border-radius:50%;background:#9cc"></div><div class="a" style="left:124px;top:20px;width:1.5px;height:1.5px;border-radius:50%;background:#9cc"></div><div class="a" style="left:70px;top:44px;width:1.5px;height:1.5px;border-radius:50%;background:#8bb"></div><div class="a" style="left:80px;top:52px;width:1.5px;height:1.5px;border-radius:50%;background:#8bb"></div><div class="a" style="left:95px;top:77px;width:1.5px;height:1.5px;border-radius:50%;background:#9cc"></div><svg class="a" style="left:5px;top:4px" width="6" height="5" viewBox="0 0 6 5"><path d="M0.5 1 H5.5 L3 4.5 Z" fill="none" stroke="#999" stroke-width=".8"/></svg><div class="a" style="left:5px;top:24px;width:1px;height:13px;background:#2a2a2a"></div><div class="a" style="left:5px;top:47px;width:1px;height:13px;background:#2a2a2a"></div><div class="a" style="left:4px;top:41px;width:4px;height:1.5px;background:#bbb"></div><div class="a" style="left:4px;top:80px;width:4px;height:4px;border-radius:50%;background:#1de9b6"></div><div class="a" style="left:25px;top:14.5px;font-size:8.2px;line-height:7.8px;font-weight:bold;color:#fff;letter-spacing:.2px">VIDEO<br>BACKGROUND</div><div class="a" style="left:26px;top:32px;width:9px;height:6px;border:1px solid #2ec296"></div><svg class="a" style="left:86px;top:29px" width="44" height="44" viewBox="0 0 44 44"><circle cx="22" cy="22" r="22" fill="#d7dde3"/><clipPath id="cc"><circle cx="22" cy="22" r="22"/></clipPath><g clip-path="url(#cc)"><path d="M6 38 C3 30 6 22 7 14 C9 6 15 2 22 3 C30 2 36 7 37 14 C38 22 41 30 38 38 Z" fill="#6b3226"/><ellipse cx="22" cy="21" rx="8" ry="10" fill="#f2b58f"/><path d="M14 8 C18 5 26 5 30 9 C26 10 18 10 14 8 Z" fill="#6b3226"/><path d="M4 44 C6 36 14 32 22 32 C30 32 38 36 40 44 Z" fill="#f0653a"/></g></svg><div class="a" style="left:26px;top:44px;width:16px;height:1.5px;background:#bdbdbd"></div><div class="a" style="left:26px;top:49px;width:24px;height:1px;background:#474747"></div><div class="a" style="left:26px;top:52px;width:32px;height:1px;background:#474747"></div><div class="a" style="left:26px;top:55px;width:30px;height:1px;background:#474747"></div><div class="a" style="left:26px;top:58px;width:32px;height:1px;background:#474747"></div><div class="a" style="left:26px;top:61px;width:29px;height:1px;background:#474747"></div><div class="a" style="left:26px;top:64px;width:16px;height:1px;background:#474747"></div><div class="a" style="left:26px;top:68px;width:15px;height:5px;border:1px solid #555"></div><div class="a" style="left:143px;top:3px;width:9px;height:33px;background:transparent"></div><div class="a" style="left:145px;top:9px;width:5px;height:1px;background:#bbb"></div><div class="a" style="left:146px;top:12px;width:4px;height:1px;background:#555"></div><div class="a" style="left:146px;top:15px;width:4px;height:1px;background:#555"></div><div class="a" style="left:146px;top:18px;width:4px;height:1px;background:#555"></div><div class="a" style="left:146px;top:21px;width:4px;height:1px;background:#555"></div><div class="a" style="left:146px;top:24px;width:4px;height:1px;background:#555"></div><div class="a" style="left:146px;top:27px;width:4px;height:1px;background:#555"></div></div>
 <div class="a" style="left:22px;top:677.5px;font-size:14.5px;color:#333;">5</div>
 <div class="a th" style="left:37px;top:606px;" id="th5"><svg class="a" style="left:5px;top:4px" width="6" height="5" viewBox="0 0 6 5"><path d="M0.5 1 H5.5 L3 4.5 Z" fill="none" stroke="#999" stroke-width=".8"/></svg><div class="a" style="left:5px;top:24px;width:1px;height:13px;background:#2a2a2a"></div><div class="a" style="left:5px;top:47px;width:1px;height:13px;background:#2a2a2a"></div><div class="a" style="left:4px;top:41px;width:4px;height:1.5px;background:#bbb"></div><div class="a" style="left:4px;top:80px;width:4px;height:4px;border-radius:50%;background:#1de9b6"></div><div class="a" style="left:25px;top:14.5px;font-size:8.2px;line-height:7.8px;font-weight:bold;color:#fff;letter-spacing:.2px">CHARTS &amp;<br>GRAPHS</div><svg class="a" style="left:26px;top:33px" width="18" height="10" viewBox="0 0 18 10"><path d="M1 9 L6 4 L10 7 L17 1" fill="none" stroke="#1de9b6" stroke-width="1.4"/></svg><svg class="a" style="left:70px;top:15px" width="16" height="62" viewBox="0 0 16 62"><circle cx="8" cy="5" r="3.5" fill="#f0c8b0"/><path d="M7 1 C5 1 4 3 5 4 L11 4 C11 2 10 1 8 1Z" fill="#3a2220"/><path d="M2 10 H14 L15 31 H1 Z" fill="#1de9b6"/><path d="M3 31 H13 L12 58 H9 L8 36 L7 58 H4 Z" fill="#1a3a6a"/><rect x="3" y="58" width="4" height="2" fill="#ddd"/><rect x="9" y="58" width="4" height="2" fill="#ddd"/></svg><div class="a" style="left:108px;top:20px;width:15px;height:1.5px;background:#bbb"></div><svg class="a" style="left:94px;top:27px" width="44" height="40" viewBox="0 0 44 40"><g transform="translate(22 20)"><path d="M21 0 A21 20 0 1 0 -14 15 L-7 7 A10 10 0 1 1 10 0 Z" fill="#1de9b6"/><path d="M21 0 A21 20 0 0 1 7 19 L3 10 A10 10 0 0 0 10 0 Z" fill="#5a5a5a"/><path d="M7 19 A21 20 0 0 1 -14 15 L-7 7 A10 10 0 0 0 3 10 Z" fill="#f2f2f2"/></g></svg><div class="a" style="left:26px;top:44px;width:16px;height:1.5px;background:#bdbdbd"></div><div class="a" style="left:26px;top:49px;width:24px;height:1px;background:#474747"></div><div class="a" style="left:26px;top:52px;width:32px;height:1px;background:#474747"></div><div class="a" style="left:26px;top:55px;width:30px;height:1px;background:#474747"></div><div class="a" style="left:26px;top:58px;width:32px;height:1px;background:#474747"></div><div class="a" style="left:26px;top:61px;width:29px;height:1px;background:#474747"></div><div class="a" style="left:26px;top:64px;width:16px;height:1px;background:#474747"></div><div class="a" style="left:26px;top:68px;width:15px;height:5px;border:1px solid #555"></div><div class="a" style="left:143px;top:3px;width:9px;height:33px;background:transparent"></div><div class="a" style="left:145px;top:9px;width:5px;height:1px;background:#bbb"></div><div class="a" style="left:146px;top:12px;width:4px;height:1px;background:#555"></div><div class="a" style="left:146px;top:15px;width:4px;height:1px;background:#555"></div><div class="a" style="left:146px;top:18px;width:4px;height:1px;background:#555"></div><div class="a" style="left:146px;top:21px;width:4px;height:1px;background:#555"></div><div class="a" style="left:146px;top:24px;width:4px;height:1px;background:#555"></div><div class="a" style="left:146px;top:27px;width:4px;height:1px;background:#555"></div></div>
 <div class="a" style="left:22px;top:797.5px;font-size:14.5px;color:#333;">6</div>
 <div class="a th" style="left:37px;top:726px;" id="th6"><svg class="a" style="left:5px;top:4px" width="6" height="5" viewBox="0 0 6 5"><path d="M0.5 1 H5.5 L3 4.5 Z" fill="none" stroke="#999" stroke-width=".8"/></svg><div class="a" style="left:5px;top:24px;width:1px;height:13px;background:#2a2a2a"></div><div class="a" style="left:5px;top:47px;width:1px;height:13px;background:#2a2a2a"></div><div class="a" style="left:4px;top:41px;width:4px;height:1.5px;background:#bbb"></div><div class="a" style="left:4px;top:80px;width:4px;height:4px;border-radius:50%;background:#1de9b6"></div><div class="a" style="left:25px;top:14.5px;font-size:8.2px;line-height:7.8px;font-weight:bold;color:#fff;letter-spacing:.2px">DEVICE<br>MOCKUPS</div><svg class="a" style="left:26px;top:31px" width="10" height="10" viewBox="0 0 10 10"><rect x="2.5" y="1" width="5" height="8" rx="1" fill="none" stroke="#1de9b6" stroke-width="1"/><path d="M0 5 H2.5 M7.5 5 H10" stroke="#1de9b6"/></svg><svg class="a" style="left:86px;top:9px" width="40" height="64" viewBox="0 0 40 64"><defs><linearGradient id="ws" x1="0" y1="0" x2="0" y2="1"><stop offset="0" stop-color="#0c2228"/><stop offset=".55" stop-color="#1d4d52"/><stop offset=".85" stop-color="#c88a5a"/><stop offset="1" stop-color="#3a2a22"/></linearGradient></defs><path d="M11.5 13 C11.5 4 13.5 1 23 1 C32.5 1 34.5 4 34.5 13 Z" fill="#f3d6c4"/><path d="M11.5 49 L12 58 C12 62 15 63 23 63 C31 63 34 62 34 58 L34.5 49 Z" fill="#eeaa8a"/><rect x="1.7" y="12.3" width="34.3" height="38.2" rx="8" fill="#e9c6b3"/><rect x="3.7" y="14.3" width="30.3" height="34.2" rx="6.5" fill="url(#ws)"/><path d="M17 48 L19 33 C19.5 30 22.5 30 23 33 L26 48 Z" fill="#e6b496"/><rect x="11" y="22" width="8" height="2.2" fill="#1de9b6"/><rect x="11" y="25.6" width="8" height="2.2" fill="#1de9b6"/><rect x="11" y="29.2" width="8" height="2.2" fill="#1de9b6"/><rect x="36" y="20" width="2" height="7" rx="1" fill="#c9a090"/></svg><div class="a" style="left:26px;top:44px;width:16px;height:1.5px;background:#bdbdbd"></div><div class="a" style="left:26px;top:49px;width:24px;height:1px;background:#474747"></div><div class="a" style="left:26px;top:52px;width:32px;height:1px;background:#474747"></div><div class="a" style="left:26px;top:55px;width:30px;height:1px;background:#474747"></div><div class="a" style="left:26px;top:58px;width:32px;height:1px;background:#474747"></div><div class="a" style="left:26px;top:61px;width:29px;height:1px;background:#474747"></div><div class="a" style="left:26px;top:64px;width:16px;height:1px;background:#474747"></div><div class="a" style="left:26px;top:68px;width:15px;height:5px;border:1px solid #555"></div><div class="a" style="left:143px;top:3px;width:9px;height:33px;background:transparent"></div><div class="a" style="left:145px;top:9px;width:5px;height:1px;background:#bbb"></div><div class="a" style="left:146px;top:12px;width:4px;height:1px;background:#555"></div><div class="a" style="left:146px;top:15px;width:4px;height:1px;background:#555"></div><div class="a" style="left:146px;top:18px;width:4px;height:1px;background:#555"></div><div class="a" style="left:146px;top:21px;width:4px;height:1px;background:#555"></div><div class="a" style="left:146px;top:24px;width:4px;height:1px;background:#555"></div><div class="a" style="left:146px;top:27px;width:4px;height:1px;background:#555"></div></div>
 <div class="a" style="left:22px;top:917.5px;font-size:14.5px;color:#333;">7</div>
 <div class="a th" style="left:37px;top:846px;" id="th7"><svg class="a" style="left:5px;top:4px" width="6" height="5" viewBox="0 0 6 5"><path d="M0.5 1 H5.5 L3 4.5 Z" fill="none" stroke="#999" stroke-width=".8"/></svg><div class="a" style="left:5px;top:24px;width:1px;height:13px;background:#2a2a2a"></div><div class="a" style="left:5px;top:47px;width:1px;height:13px;background:#2a2a2a"></div><div class="a" style="left:4px;top:41px;width:4px;height:1.5px;background:#bbb"></div><div class="a" style="left:4px;top:80px;width:4px;height:4px;border-radius:50%;background:#1de9b6"></div><svg class="a" style="left:78px;top:0" width="74" height="84" viewBox="0 0 74 84"><rect width="74" height="84" fill="#e7e9e1"/><ellipse cx="14" cy="20" rx="12" ry="9" fill="#dfe8d8"/><ellipse cx="60" cy="40" rx="10" ry="8" fill="#e2e9dc"/><path d="M7.9 84 C12 76 15 70 20.8 68 C28 64 34 60 39.4 58.8 C50 57 60 55 74 54.2 V84 Z" fill="#a8cbf0"/><ellipse cx="35" cy="52" rx="4.5" ry="7" fill="#aacdf0"/><path d="M52.3 0 C50 10 47 20 44 28 C42 33 40 36 38.4 40" fill="none" stroke="#a8c8f0" stroke-width="2.2"/><path d="M30 46 C26 40 24 36 22 30" fill="none" stroke="#b0cdf0" stroke-width="1.5"/><path d="M54 24 L60 28 L58 33 L52 30 Z" fill="#b5d0f0"/><path d="M5 10 L30 30 M15 50 L45 20 M50 10 L70 45" stroke="#f4f1e6" stroke-width=".8"/><circle cx="38.4" cy="41" r="1.8" fill="#d33"/></svg><div class="a" style="left:141px;top:0;width:11px;height:33px;background:#151515"></div><div class="a" style="left:25px;top:14.5px;font-size:8.2px;line-height:7.8px;font-weight:bold;color:#fff;letter-spacing:.2px">LET'S<br>CONNECT</div><div class="a" style="left:26px;top:32px;width:9px;height:6px;background:linear-gradient(45deg,#1de9b6,#1a1a1a)"></div><div class="a" style="left:20px;top:48px;width:3px;height:3px;border-radius:50%;background:#aaa"></div><div class="a" style="left:20px;top:53px;width:3px;height:3px;border-radius:50%;background:#aaa"></div><div class="a" style="left:20px;top:58px;width:3px;height:3px;border-radius:50%;background:#aaa"></div><div class="a" style="left:20px;top:63px;width:3px;height:3px;border-radius:50%;background:#aaa"></div><div class="a" style="left:26px;top:48px;width:24px;height:1.5px;background:#bbb"></div><div class="a" style="left:26px;top:53px;width:30px;height:1px;background:#4a4a4a"></div><div class="a" style="left:26px;top:56px;width:30px;height:1px;background:#4a4a4a"></div><div class="a" style="left:26px;top:59px;width:30px;height:1px;background:#4a4a4a"></div><div class="a" style="left:26px;top:62px;width:30px;height:1px;background:#4a4a4a"></div><div class="a" style="left:26px;top:65px;width:20px;height:1px;background:#4a4a4a"></div><div class="a" style="left:26px;top:72px;width:9px;height:9px;background:repeating-conic-gradient(#1a1a1a 0 25%,#e0e0e0 0 50%) 0 0/3px 3px"></div><div class="a" style="left:38px;top:76px;width:15px;height:5px;border:1px solid #444"></div></div>
 <div class="a" style="left:1px;top:987px;width:206px;height:42px;background:#fff;border-top:1px solid #e3e6e9"></div>
 <div class="a" style="left:27px;top:993px;width:70px;height:30px;border-radius:4px;background:#fff;border:1px solid #dfe2e6"></div>
 <svg class="a" style="left:35px;top:1001px;" width="12" height="13" viewBox="0 0 12 13"><rect x="1" y="1" width="9" height="11" rx="1" fill="none" stroke="#555" stroke-width="1.2"/><path d="M3 4 H8 M3 6.5 H8 M3 9 H6" stroke="#555" stroke-width="1"/></svg>
 <div class="a" style="left:51px;top:1000px;font-size:14px;color:#333">Notes</div>
 <div class="a" style="left:124px;top:993px;width:58px;height:30px;border-radius:4px;background:#dde1e6;border:1px solid #e6e9ec"></div>
 <div class="a" style="left:152px;top:994px;width:29px;height:28px;border-radius:0 3px 3px 0;background:#fff"></div>
 <svg class="a" style="left:130px;top:997px;" width="18" height="22" viewBox="0 0 18 22"><g fill="none" stroke="#a3aab3" stroke-width="1.1"><rect x="1" y="1" width="6.5" height="5.5"/><rect x="10" y="1" width="6.5" height="5.5"/><rect x="1" y="8.5" width="6.5" height="5.5"/><rect x="10" y="8.5" width="6.5" height="5.5"/><rect x="1" y="16" width="6.5" height="5.5"/><rect x="10" y="16" width="6.5" height="5.5"/></g></svg>
 <svg class="a" style="left:160px;top:997px;" width="14" height="22" viewBox="0 0 14 22"><g fill="none" stroke="#333" stroke-width="1.3"><rect x="1.5" y="1" width="10" height="5.5" rx="1"/><rect x="1.5" y="8.5" width="10" height="5.5" rx="1"/><rect x="1.5" y="16" width="10" height="5.5" rx="1"/></g></svg>
</div>
</body></html>
